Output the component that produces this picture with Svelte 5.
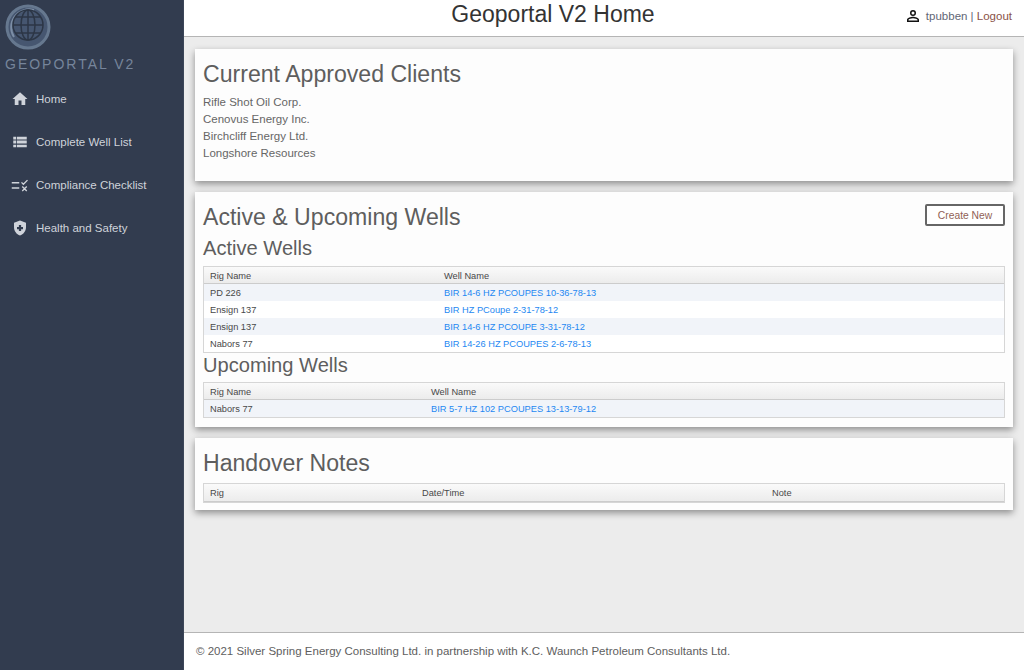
<script>
	const clients = ['Rifle Shot Oil Corp.', 'Cenovus Energy Inc.', 'Birchcliff Energy Ltd.', 'Longshore Resources'];
	const active = [
		{ rig: 'PD 226', well: 'BIR 14-6 HZ PCOUPES 10-36-78-13' },
		{ rig: 'Ensign 137', well: 'BIR HZ PCoupe 2-31-78-12' },
		{ rig: 'Ensign 137', well: 'BIR 14-6 HZ PCOUPE 3-31-78-12' },
		{ rig: 'Nabors 77', well: 'BIR 14-26 HZ PCOUPES 2-6-78-13' }
	];
	const upcoming = [{ rig: 'Nabors 77', well: 'BIR 5-7 HZ 102 PCOUPES 13-13-79-12' }];
</script>

<div class="layout">
	<aside class="sidebar">
		<div class="logo">
			<svg width="46" height="46" viewBox="0 0 46 46">
				<circle cx="23" cy="23" r="21" fill="#465670" stroke="#66788f" stroke-width="3" />
				<path d="M9 33 A18 18 0 0 1 29 6" fill="none" stroke="#7c8ea6" stroke-width="2" />
				<g fill="none" stroke="#2c3646" stroke-width="1.500">
					<circle cx="23" cy="21" r="15" />
					<ellipse cx="23" cy="21" rx="7" ry="15" />
					<path d="M23 6V36M8 21H38M10.500 13H35.500M10.500 29H35.500" />
				</g>
			</svg>
		</div>
		<div class="brand">GEOPORTAL V2</div>
		<nav>
			<a class="nav-item" href="#home">
				<svg viewBox="0 0 24 24" width="18" height="18"><path fill="currentColor" d="M10 20v-6h4v6h5v-8h3L12 3 2 12h3v8z" /></svg>
				<span>Home</span>
			</a>
			<a class="nav-item" href="#wells">
				<svg viewBox="0 0 24 24" width="18" height="18"><path fill="currentColor" d="M3 5h4v3.500H3zM8 5h13v3.500H8zM3 10h4v4H3zM8 10h13v4H8zM3 15.500h4V19H3zM8 15.500h13V19H8z" /></svg>
				<span>Complete Well List</span>
			</a>
			<a class="nav-item" href="#compliance">
				<svg viewBox="0 0 24 24" width="18" height="18"><path fill="none" stroke="currentColor" stroke-width="1.800" d="M1 9h10M1 16h10M14 8.500l2.500 2.500L22 5.500M15 14l6 6M21 14l-6 6" /></svg>
				<span>Compliance Checklist</span>
			</a>
			<a class="nav-item" href="#safety">
				<svg viewBox="0 0 24 24" width="18" height="18"><path fill="currentColor" fill-rule="evenodd" d="M12 2l8 3v6c0 5-3.400 9.500-8 11-4.600-1.500-8-6-8-11V5zM10.500 8v2.500H8v3h2.500V16h3v-2.500H16v-3h-2.500V8z" /></svg>
				<span>Health and Safety</span>
			</a>
		</nav>
	</aside>

	<div class="main">
		<header class="topbar">
			<h1>Geoportal V2 Home</h1>
			<div class="user">
				<svg viewBox="0 0 24 24" width="18" height="18"><path fill="#111" d="M12 6a2 2 0 1 1 0 4 2 2 0 0 1 0-4m0 9c2.700 0 5.800 1.300 6 2v1H6v-1c.2-.7 3.300-2 6-2M12 4a4 4 0 1 0 0 8 4 4 0 0 0 0-8zm0 9c-2.700 0-8 1.300-8 4v3h16v-3c0-2.700-5.300-4-8-4z" /></svg>
				<span class="username">tpubben | <a href="#logout">Logout</a></span>
			</div>
		</header>

		<main class="content">
			<section class="card clients">
				<h2>Current Approved Clients</h2>
				{#each clients as client}
					<p>{client}</p>
				{/each}
			</section>

			<section class="card wells">
				<button class="create">Create New</button>
				<h2>Active &amp; Upcoming Wells</h2>
				<h3>Active Wells</h3>
				<div class="table">
					<div class="row head active-cols"><span>Rig Name</span><span>Well Name</span></div>
					{#each active as row}
						<div class="row active-cols"><span>{row.rig}</span><a href="#well">{row.well}</a></div>
					{/each}
				</div>
				<h3 class="upcoming">Upcoming Wells</h3>
				<div class="table">
					<div class="row head upcoming-cols"><span>Rig Name</span><span>Well Name</span></div>
					{#each upcoming as row}
						<div class="row upcoming-cols"><span>{row.rig}</span><a href="#well">{row.well}</a></div>
					{/each}
				</div>
			</section>

			<section class="card notes">
				<h2>Handover Notes</h2>
				<div class="table">
					<div class="row head notes-cols"><span>Rig</span><span>Date/Time</span><span>Note</span></div>
				</div>
			</section>
		</main>

		<footer class="footer">© 2021 Silver Spring Energy Consulting Ltd. in partnership with K.C. Waunch Petroleum Consultants Ltd.</footer>
	</div>
</div>

<style>
	:global(body) {
		font-family: 'Liberation Sans', Arial, sans-serif;
		overflow: hidden;
	}

	.layout {
		display: flex;
		height: 670px;
	}

	.sidebar {
		width: 183px;
		flex-shrink: 0;
		background: #323c4f;
		color: #cfd3da;
		border-right: 1px solid #3c4658;
	}

	.logo {
		height: 50px;
		padding: 4px 0 0 5px;
		box-sizing: border-box;
	}

	.brand {
		margin: 6px 0 0 5px;
		height: 16px;
		font-size: 14px;
		line-height: 16px;
		letter-spacing: 2px;
		color: #76859b;
	}

	nav {
		margin-top: 5px;
	}

	.nav-item {
		display: flex;
		align-items: center;
		gap: 7px;
		height: 43px;
		padding-left: 11px;
		font-size: 11.500px;
		color: #cfd3da;
		text-decoration: none;
	}

	.main {
		flex: 1;
		display: flex;
		flex-direction: column;
		background: #ececec;
		min-width: 0;
	}

	.topbar {
		position: relative;
		height: 37px;
		flex-shrink: 0;
		box-sizing: border-box;
		display: flex;
		justify-content: center;
		background: #fff;
		border-bottom: 1px solid #b5b5b5;
	}

	h1 {
		margin: 0;
		font-size: 23px;
		font-weight: 400;
		line-height: 28px;
		color: #333;
		padding-right: 102px;
	}

	.user {
		position: absolute;
		right: 12px;
		top: 7px;
		display: flex;
		align-items: center;
		gap: 4px;
		font-size: 11.500px;
		color: #5f6675;
	}

	.user a {
		color: #8a5248;
		text-decoration: none;
	}

	.content {
		flex: 1;
		padding: 12px 11px 0;
		display: flex;
		flex-direction: column;
		gap: 11px;
	}

	.card {
		position: relative;
		background: #fdfdfd;
		box-shadow: 0 3px 7px rgba(0, 0, 0, 0.4);
		padding: 0 8px;
	}

	h2 {
		margin: 0;
		font-size: 23.100px;
		font-weight: 400;
		line-height: 28px;
		color: #5e5e5e;
	}

	h3 {
		margin: 0;
		font-size: 20.100px;
		font-weight: 400;
		line-height: 24px;
		color: #5e5e5e;
	}

	.clients {
		height: 132px;
		box-sizing: border-box;
		padding-top: 11px;
	}

	.clients h2 {
		margin-bottom: 6px;
	}

	.clients p {
		margin: 0;
		font-size: 11.500px;
		line-height: 17px;
		color: #666;
	}

	.wells {
		height: 235px;
		box-sizing: border-box;
		padding-top: 11px;
	}

	.wells h3 {
		margin: 5px 0 6px;
	}

	.wells h3.upcoming {
		margin: 0 0 5px;
	}

	.create {
		position: absolute;
		top: 12px;
		right: 8px;
		width: 80px;
		height: 22px;
		padding: 0;
		background: #fff;
		border: 2px solid #666;
		border-radius: 2px;
		font-family: inherit;
		font-size: 10.300px;
		color: #915f55;
	}

	.table {
		border: 1px solid #d6d6d6;
		font-size: 9.250px;
		color: #484848;
	}

	.row {
		display: grid;
		height: 17px;
		align-items: center;
		padding: 0 6px;
		background: #fff;
	}

	.row:nth-child(even) {
		background: #f1f4f9;
	}

	.row.head {
		padding-top: 2px;
		background: linear-gradient(#fafafa, #ececec);
		border-bottom: 1px solid #ccc;
		box-sizing: border-box;
	}

	.row a {
		color: #1e88f2;
		text-decoration: none;
	}

	.active-cols {
		grid-template-columns: 234px 1fr;
	}

	.upcoming-cols {
		grid-template-columns: 221px 1fr;
	}

	.notes-cols {
		grid-template-columns: 212px 350px 1fr;
	}

	.notes {
		height: 72px;
		box-sizing: border-box;
		padding-top: 11px;
	}

	.notes h2 {
		margin-bottom: 6px;
	}

	.notes .row.head {
		height: 18px;
		padding-top: 0;
	}

	.footer {
		height: 38px;
		flex-shrink: 0;
		box-sizing: border-box;
		padding: 12px 12px 0;
		background: #fff;
		border-top: 1px solid #b5b5b5;
		font-size: 11.500px;
		color: #5e5e5e;
	}
</style>
